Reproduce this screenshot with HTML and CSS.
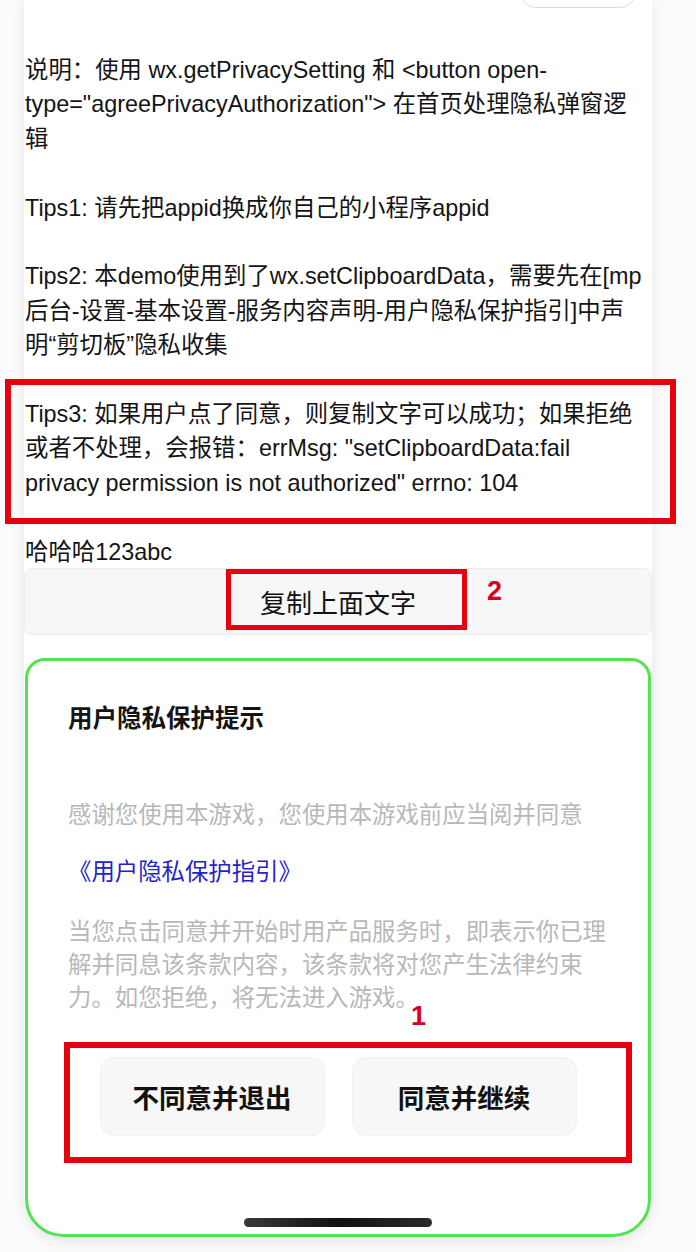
FILE: index.html
```html
<!DOCTYPE html>
<html lang="zh-CN">
<head>
<meta charset="utf-8">
<title>隐私弹窗示例</title>
<link rel="stylesheet" href="styles.css">
</head>
<body>
<div class="stage">
  <div class="screen">
    <div class="navbar"><div class="capsule"></div></div>
    <div class="content">
      <p class="para">说明：使用 wx.getPrivacySetting 和 &lt;button open-<br>type="agreePrivacyAuthorization"&gt; 在首页处理隐私弹窗逻<br>辑</p>
      <p class="para">Tips1: 请先把appid换成你自己的小程序appid</p>
      <p class="para">Tips2: 本demo使用到了wx.setClipboardData，需要先在[mp<br>后台-设置-基本设置-服务内容声明-用户隐私保护指引]中声<br>明“剪切板”隐私收集</p>
      <p class="para">Tips3: 如果用户点了同意，则复制文字可以成功；如果拒绝<br>或者不处理，会报错：errMsg: "setClipboardData:fail<br>privacy permission is not authorized" errno: 104</p>
      <p class="para para-last">哈哈哈123abc</p>
    </div>
    <div class="copy-btn">复制上面文字</div>
    <div class="sheet">
      <div class="sheet-title">用户隐私保护提示</div>
      <p class="sheet-desc">感谢您使用本游戏，您使用本游戏前应当阅并同意</p>
      <p class="sheet-link">《用户隐私保护指引》</p>
      <p class="sheet-desc sheet-desc-long">当您点击同意并开始时用产品服务时，即表示你已理<br>解并同息该条款内容，该条款将对您产生法律约束<br>力。如您拒绝，将无法进入游戏。</p>
      <div class="sheet-actions">
        <div class="sheet-btn">不同意并退出</div>
        <div class="sheet-btn">同意并继续</div>
      </div>
      <div class="home-indicator"></div>
    </div>
  </div>

  <div class="mark mark-tips"></div>
  <div class="mark mark-copy"></div>
  <div class="mark-label label-copy">2</div>
  <div class="mark mark-actions"></div>
  <div class="mark-label label-actions">1</div>
</div>
</body>
</html>
```

FILE: styles.css
```css
* {
  box-sizing: border-box;
}

html, body {
  margin: 0;
  padding: 0;
}

body {
  background: #fbfbfb;
  font-family: "Liberation Sans", "Noto Sans CJK SC", sans-serif;
  color: #141414;
  overflow: hidden;
}

.stage {
  position: relative;
  width: 696px;
  height: 1252px;
}

.screen {
  width: 628px;
  margin-left: 24px;
  background: #ffffff;
  display: flex;
  flex-direction: column;
  border-radius: 0 0 40px 40px;
  box-shadow: 0 4px 14px rgba(0, 0, 0, 0.09);
}

.navbar {
  height: 53px;
  display: flex;
  justify-content: flex-end;
  align-items: flex-start;
  padding-right: 16px;
}

.capsule {
  width: 116px;
  height: 32px;
  margin-top: -24px;
  border: 1px solid #dedede;
  border-radius: 16px;
  background: #fff;
}

.content {
  padding-left: 1px;
  font-size: 23.4px;
  line-height: 34.4px;
}

.para {
  margin: 0 0 34.4px 0;
  white-space: nowrap;
}

.para-last {
  margin-bottom: 0;
}

.copy-btn {
  height: 67px;
  margin-top: -1px;
  display: flex;
  align-items: center;
  justify-content: center;
  background: #f7f7f7;
  border: 1px solid #ececec;
  border-radius: 8px;
  font-family: "Noto Sans CJK SC", sans-serif;
  font-size: 26px;
  color: #111;
}

.sheet {
  margin: 23px 1px 0 1px;
  border: 3px solid #52e352;
  border-radius: 20px 20px 38px 38px;
  padding: 39px 40px 7px 40px;
  display: flex;
  flex-direction: column;
  font-family: "Noto Sans CJK SC", sans-serif;
}

.sheet-title {
  font-size: 24.5px;
  line-height: 34px;
  font-weight: 700;
  color: #141414;
}

.sheet-desc {
  margin: 62.5px 0 0 0;
  font-size: 23.4px;
  line-height: 33px;
  color: #b8b8b8;
  white-space: nowrap;
}

.sheet-link {
  margin: 24px 0 0 0;
  font-size: 23.4px;
  line-height: 33px;
  color: #2323c8;
}

.sheet-desc-long {
  margin-top: 27px;
}

.sheet-actions {
  margin-top: 44.5px;
  display: flex;
  justify-content: center;
  gap: 27px;
}

.sheet-btn {
  width: 225px;
  height: 79px;
  display: flex;
  align-items: center;
  justify-content: center;
  background: #f7f7f7;
  border: 1px solid #f1f1f1;
  border-radius: 14px;
  font-size: 26.5px;
  font-weight: 700;
  color: #111;
}

.home-indicator {
  align-self: center;
  margin-top: 82px;
  width: 188px;
  height: 9px;
  border-radius: 5px;
  background: linear-gradient(90deg, #3a3a3a, #111 50%, #2a2a2a);
}

.mark {
  position: absolute;
  border: 6px solid #e8000d;
}

.mark-tips {
  left: 5px;
  top: 379px;
  width: 671px;
  height: 145px;
}

.mark-copy {
  left: 226px;
  top: 569px;
  width: 241px;
  height: 61px;
  border-width: 5px;
}

.mark-actions {
  left: 64px;
  top: 1042px;
  width: 568px;
  height: 121px;
}

.mark-label {
  position: absolute;
  font-family: "Liberation Sans", sans-serif;
  font-weight: 700;
  font-size: 27px;
  line-height: 27px;
  color: #d8001a;
}

.label-copy {
  left: 487px;
  top: 578px;
}

.label-actions {
  left: 411px;
  top: 1003px;
}
```
